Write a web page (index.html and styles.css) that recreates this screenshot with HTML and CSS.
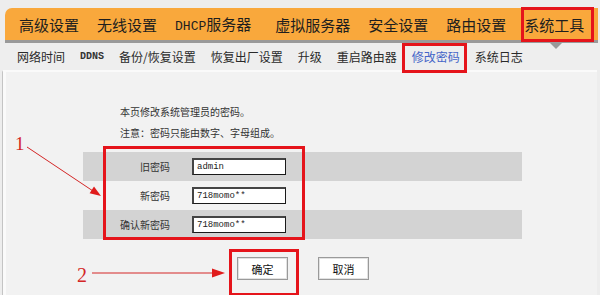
FILE: index.html
```html
<!DOCTYPE html>
<html lang="zh-CN">
<head>
<meta charset="utf-8">
<title>修改密码</title>
<link rel="stylesheet" href="styles.css">
</head>
<body>
<div class="page">
  <nav class="topnav">
    <span class="tab">高级设置</span>
    <span class="tab">无线设置</span>
    <span class="tab"><span class="ascii">DHCP</span>服务器</span>
    <span class="tab">虚拟服务器</span>
    <span class="tab">安全设置</span>
    <span class="tab">路由设置</span>
    <span class="tab">系统工具</span>
  </nav>
  <nav class="subnav">
    <span class="sub">网络时间</span>
    <span class="sub ascii-sub">DDNS</span>
    <span class="sub">备份/恢复设置</span>
    <span class="sub">恢复出厂设置</span>
    <span class="sub">升级</span>
    <span class="sub">重启路由器</span>
    <span class="sub active">修改密码</span>
    <span class="sub">系统日志</span>
  </nav>
  <main class="panel">
    <p class="note">本页修改系统管理员的密码。</p>
    <p class="note">注意：密码只能由数字、字母组成。</p>
    <div class="form">
      <div class="row shaded"><label class="lbl">旧密码</label><input class="field" type="text" value="admin"></div>
      <div class="row"><label class="lbl">新密码</label><input class="field" type="text" value="718momo**"></div>
      <div class="row shaded"><label class="lbl">确认新密码</label><input class="field" type="text" value="718momo**"></div>
    </div>
    <div class="buttons">
      <button class="btn ok">确定</button>
      <button class="btn cancel">取消</button>
    </div>
  </main>
  <div class="caret"></div>
  <svg class="marks" width="600" height="295" viewBox="0 0 600 295">
    <g fill="none" stroke="#e5141b" stroke-width="3">
      <rect x="522.5" y="8.5" width="70" height="32"/>
      <rect x="403.5" y="44.5" width="62" height="27"/>
      <rect x="104.5" y="147.5" width="199" height="91"/>
      <rect x="230.5" y="250.5" width="67" height="44"/>
    </g>
    <g stroke="#d42626" stroke-width="1">
      <line x1="27" y1="147" x2="93" y2="191"/>
      <line x1="92" y1="273" x2="214" y2="273"/>
    </g>
    <g fill="#e01c1c">
      <polygon points="101,196 89.6,193.2 94,186.6"/>
      <polygon points="225,273 212,268.5 212,277.5"/>
    </g>
    <g fill="#d42626" font-family="Liberation Serif, serif">
      <text x="15" y="150" font-size="19">1</text>
      <text x="77" y="282" font-size="20">2</text>
    </g>
  </svg>
</div>
</body>
</html>
```
FILE: styles.css
```css
* { box-sizing: border-box; }
html, body { margin: 0; padding: 0; }
body {
  background: #ededed;
  font-family: "Noto Sans CJK SC", "Noto Sans", sans-serif;
  color: #222;
  width: 600px;
  height: 295px;
  overflow: hidden;
}
.page {
  position: relative;
  width: 600px;
  height: 295px;
  padding-top: 8px;
}
.topnav {
  margin: 0 2px 0 5px;
  height: 35px;
  background: #f9a83c;
  border-bottom: 3px solid #9a9a9a;
  border-top-left-radius: 7px;
  display: flex;
  align-items: center;
  gap: 18px;
  padding-left: 14px;
  font-size: 15px;
  line-height: 1;
  color: #1e1e1e;
}
.tab { white-space: nowrap; }
.ascii {
  font-family: "Liberation Mono", monospace;
  font-size: 13px;
}
.tab:nth-child(4) { margin-left: 6px; }
.subnav {
  height: 27px;
  display: flex;
  align-items: center;
  gap: 15px;
  padding-left: 17px;
  font-size: 12px;
  line-height: 1;
  color: #2a2a2a;
  background: #eeeeee;
}
.sub { white-space: nowrap; }
.ascii-sub {
  font-family: "Liberation Mono", monospace;
  font-size: 10px;
  font-weight: bold;
  color: #333;
}
.active { color: #4565c8; }
.caret {
  position: absolute;
  left: 550px;
  top: 43px;
  width: 0;
  height: 0;
  border-left: 6px solid transparent;
  border-right: 6px solid transparent;
  border-top: 6px solid #999;
}
.panel {
  margin-left: 2px;
  margin-right: 3px;
  height: 225px;
  background: #f2f2f2;
  border-left: 1px solid #c4c4c4;
  border-top: 2px solid #fafafa;
  box-shadow: inset 3px 0 0 #fafafa;
  padding-top: 29px;
  font-size: 10px;
  color: #333;
}
.note {
  margin: 0 0 0 117px;
  line-height: 21px;
}
.form {
  margin: 9px 0 0 80px;
  width: 439px;
}
.row {
  height: 29px;
  display: grid;
  grid-template-columns: 87px 92px;
  column-gap: 22px;
  align-items: center;
}
.shaded { background: #d3d3d3; }
.lbl {
  text-align: right;
  font-size: 10px;
  color: #333;
}
.field {
  width: 94px;
  height: 17px;
  margin: 0;
  padding: 0 0 0 3px;
  background: #fff;
  border: 1px solid #1a1a1a;
  border-top: 2px solid #444;
  border-left: 2px solid #444;
  font-family: "Liberation Mono", monospace;
  font-size: 9px;
  color: #222;
  outline: none;
}
.buttons {
  margin: 18px 0 0 234px;
  display: flex;
  gap: 30px;
}
.btn {
  width: 51px;
  height: 23px;
  margin: 0;
  padding: 0;
  background: #fff;
  border: 1px solid #9a9a9a;
  box-shadow: inset 0 0 0 1px #e2e2e2;
  font-family: "Noto Sans CJK SC", sans-serif;
  font-size: 11px;
  color: #111;
}
.marks {
  position: absolute;
  left: 0;
  top: 0;
  pointer-events: none;
}
```
